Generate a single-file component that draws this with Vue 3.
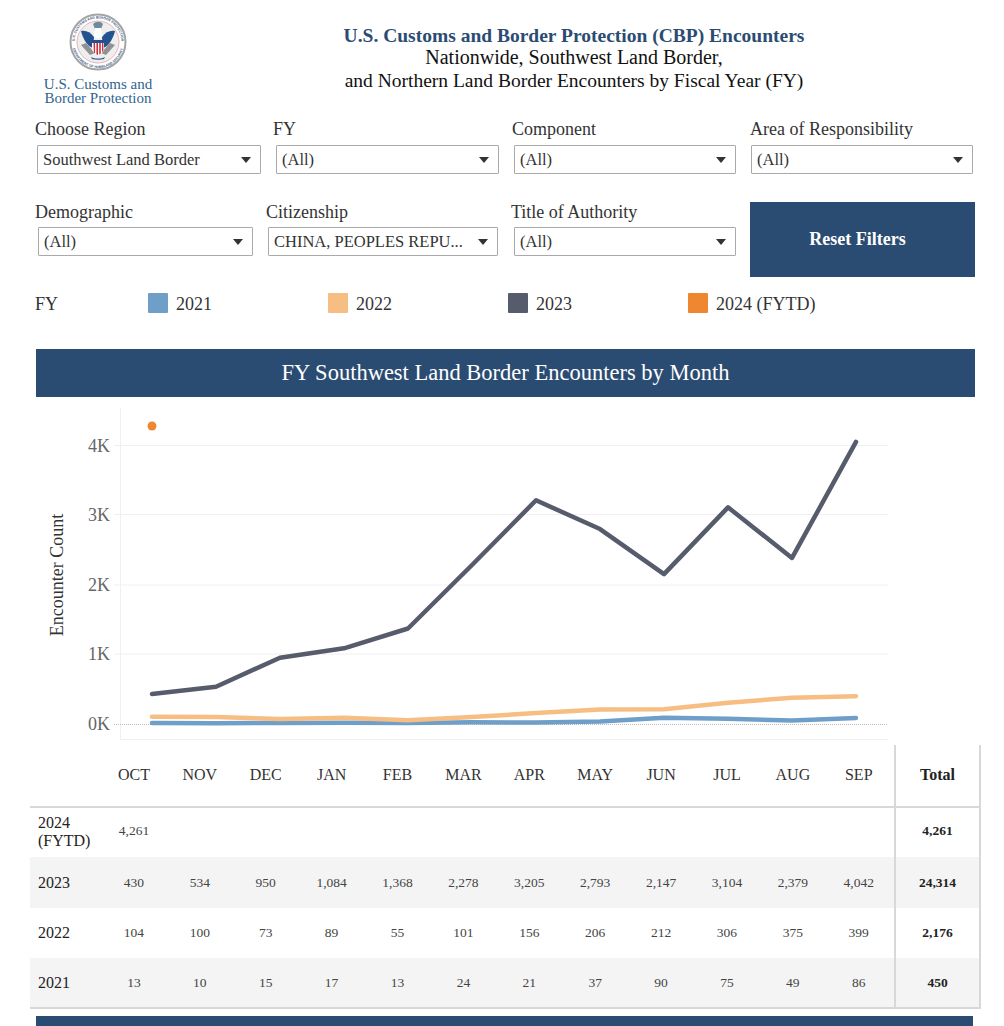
<script setup>
import { computed } from "vue";

const topFilters = [
  { label: "Choose Region", value: "Southwest Land Border" },
  { label: "FY", value: "(All)" },
  { label: "Component", value: "(All)" },
  { label: "Area of Responsibility", value: "(All)" },
];
const bottomFilters = [
  { label: "Demographic", value: "(All)" },
  { label: "Citizenship", value: "CHINA, PEOPLES REPU..." },
  { label: "Title of Authority", value: "(All)" },
];

const months = ["OCT", "NOV", "DEC", "JAN", "FEB", "MAR", "APR", "MAY", "JUN", "JUL", "AUG", "SEP"];

const years = [
  { name: "2024 (FYTD)", legend: "2024 (FYTD)", color: "#ef8630", values: [4261], total: "4,261" },
  { name: "2023", legend: "2023", color: "#575c6c", values: [430, 534, 950, 1084, 1368, 2278, 3205, 2793, 2147, 3104, 2379, 4042], total: "24,314" },
  { name: "2022", legend: "2022", color: "#f6be83", values: [104, 100, 73, 89, 55, 101, 156, 206, 212, 306, 375, 399], total: "2,176" },
  { name: "2021", legend: "2021", color: "#6f9fc9", values: [13, 10, 15, 17, 13, 24, 21, 37, 90, 75, 49, 86], total: "450" },
];

const legendItems = computed(() => [...years].reverse());

// chart coordinates, svg starts at y=397 of the page
const xOf = (i) => 152 + i * 64;
const yOf = (v) => 327 - v * 0.0698;

const ticks = [
  { label: "4K", y: 48.5 },
  { label: "3K", y: 117.5 },
  { label: "2K", y: 188 },
  { label: "1K", y: 257 },
];

const lines = computed(() =>
  years
    .filter((y) => y.values.length > 1)
    .reverse()
    .map((y) => ({
      color: y.color,
      points: y.values.map((v, i) => `${xOf(i)},${yOf(v)}`).join(" "),
    }))
);

const fmt = (v) => (v === undefined ? "" : v.toLocaleString("en-US"));
</script>

<template>
  <div class="app">
    <header class="top">
      <div class="logo">
        <svg class="seal" width="60" height="60" viewBox="0 0 60 60">
          <circle cx="30" cy="30" r="27.5" fill="#fff" stroke="#a4a4a4" stroke-width="2" />
          <circle cx="30" cy="30" r="21" fill="#eeeeee" stroke="#e4a3a8" stroke-width="0.8" />
          <defs>
            <path id="sealTop" d="M6.5 30a23.5 23.5 0 0 1 47 0" />
            <path id="sealBottom" d="M4 30a26 26 0 0 0 52 0" />
          </defs>
          <text class="seal-text"><textPath href="#sealTop" startOffset="50%" text-anchor="middle">U.S. CUSTOMS AND BORDER PROTECTION</textPath></text>
          <text class="seal-text"><textPath href="#sealBottom" startOffset="50%" text-anchor="middle">DEPARTMENT OF HOMELAND SECURITY</textPath></text>
          <path d="M13 33l9 10 5-2-9-10zM47 33l-9 10-5-2 9-10z" fill="#929292" />
          <path d="M13 19c5-1 9 1 13 6l-1 11c-6-2-10-9-12-17z" fill="#23528f" />
          <path d="M47 19c-5-1-9 1-13 6l1 11c6-2 10-9 12-17z" fill="#23528f" />
          <path d="M25 12c3-3 8-3 10 0l-2 5h-6z" fill="#6f8a9a" />
          <path d="M27 16h6l1 8-2 2h-4l-2-2z" fill="#fff" />
          <path d="M24 28h12v8c0 4-3 6-6 7-3-1-6-3-6-7z" fill="#fff" />
          <path d="M24 28h12v3H24z" fill="#24508f" />
          <path d="M25.5 31h1.6v10h-1.2zM28.4 31H30v12l-1.6-.7zM31.2 31h1.6v10.5l-1.6.9zM34 31h1.4v7l-1.4 2.6z" fill="#c8333f" />
          <path d="M23 45c4 2 10 2 14 0l-1 2c-4 1-8 1-12 0z" fill="#2c5a96" />
        </svg>
        <div class="logo-text">U.S. Customs and<br />Border Protection</div>
      </div>
      <div class="heading">
        <h1>U.S. Customs and Border Protection (CBP) Encounters</h1>
        <p class="wide">Nationwide, Southwest Land Border,</p>
        <p>and Northern Land Border Encounters by Fiscal Year (FY)</p>
      </div>
    </header>

    <section class="filters row-a">
      <div v-for="f in topFilters" :key="f.label" class="filter">
        <label>{{ f.label }}</label>
        <div class="select">
          <span>{{ f.value }}</span>
          <i class="caret"></i>
        </div>
      </div>
    </section>

    <section class="filters row-b">
      <div v-for="f in bottomFilters" :key="f.label" class="filter">
        <label>{{ f.label }}</label>
        <div class="select">
          <span>{{ f.value }}</span>
          <i class="caret"></i>
        </div>
      </div>
      <button class="reset">Reset Filters</button>
    </section>

    <section class="legend">
      <span class="legend-title">FY</span>
      <div v-for="y in legendItems" :key="y.name" class="legend-item">
        <i class="swatch" :style="{ background: y.color }"></i>
        <span>{{ y.legend }}</span>
      </div>
    </section>

    <h2 class="band">FY Southwest Land Border Encounters by Month</h2>

    <svg class="chart" width="1004" height="348" viewBox="0 0 1004 348">
      <line x1="120.5" y1="11" x2="120.5" y2="342" stroke="#f0f0f0" />
      <line x1="120" y1="342.5" x2="888" y2="342.5" stroke="#f0f0f0" />
      <g v-for="t in ticks" :key="t.label">
        <line x1="114" :y1="t.y" x2="888" :y2="t.y" stroke="#f0f0f0" />
        <text x="110" :y="t.y + 6" class="tick">{{ t.label }}</text>
      </g>
      <line x1="114" y1="327.5" x2="888" y2="327.5" stroke="#bbb" stroke-dasharray="1 1" />
      <text x="110" y="333" class="tick">0K</text>
      <text class="axis" transform="translate(63 178) rotate(-90)">Encounter Count</text>
      <polyline
        v-for="l in lines"
        :key="l.color"
        :points="l.points"
        :stroke="l.color"
        stroke-width="4.5"
        stroke-linecap="round"
        stroke-linejoin="round"
        fill="none"
      />
      <circle cx="152" cy="29" r="4.5" fill="#ef8630" />
    </svg>

    <table class="grid">
      <thead>
        <tr>
          <th class="head-year"></th>
          <th v-for="m in months" :key="m" class="month">{{ m }}</th>
          <th class="gap"></th>
          <th class="total">Total</th>
        </tr>
      </thead>
      <tbody>
        <tr v-for="y in years" :key="y.name">
          <th class="year">{{ y.name }}</th>
          <td v-for="(m, i) in months" :key="m">{{ fmt(y.values[i]) }}</td>
          <td class="gap"></td>
          <td class="total">{{ y.total }}</td>
        </tr>
      </tbody>
    </table>

    <div class="band-next"></div>
  </div>
</template>

<style scoped>
.app {
  width: 1004px;
  height: 1026px;
  overflow: hidden;
  background: #fff;
  color: #333;
  font-family: "Liberation Serif", serif;
}

.top {
  display: flex;
  height: 113px;
}
.logo {
  width: 196px;
  padding-top: 12px;
  display: flex;
  flex-direction: column;
  align-items: center;
}
.seal-text {
  font-family: "Liberation Sans", sans-serif;
  font-size: 3.4px;
  font-weight: 700;
  fill: #3a5a86;
}
.logo-text {
  margin-top: 5px;
  font-size: 15px;
  line-height: 14px;
  text-align: center;
  color: #2f6490;
  white-space: nowrap;
}
.heading {
  width: 756px;
  padding-top: 26px;
  text-align: center;
  color: #111;
  font-size: 19.5px;
  line-height: 23px;
}
.heading h1 {
  margin: 0 0 -1px;
  font-size: 19.5px;
  line-height: 20px;
  color: #2b4c72;
}
.heading p {
  margin: 0;
}
.heading .wide {
  font-size: 20px;
  line-height: 24px;
}

.filters {
  display: grid;
  padding-left: 35px;
}
.row-a {
  grid-template-columns: 238px 239px 238px 225px;
  height: 89px;
}
.row-b {
  grid-template-columns: 231px 245px 239px 225px;
  height: 91px;
}
.filter label {
  display: block;
  height: 32px;
  padding-top: 6px;
  box-sizing: border-box;
  font-size: 18px;
  line-height: 20px;
}
.select {
  height: 29px;
  box-sizing: border-box;
  display: flex;
  align-items: center;
  justify-content: space-between;
  padding: 0 9px 0 5px;
  border: 1px solid #aaa;
  border-radius: 1px;
  font-size: 16.5px;
  white-space: nowrap;
}
.caret {
  width: 0;
  height: 0;
  border-left: 5px solid transparent;
  border-right: 5px solid transparent;
  border-top: 6px solid #333;
}
.row-a .filter:nth-child(1) .select { margin: 0 12px 0 2px; }
.row-a .filter:nth-child(2) .select { margin: 0 13px 0 3px; }
.row-a .filter:nth-child(3) .select { margin: 0 14px 0 2px; }
.row-a .filter:nth-child(4) .select { margin: 0 2px 0 1px; }
.row-b .filter label { height: 25px; padding-top: 0; }
.row-b .filter:nth-child(1) .select { margin: 0 13px 0 3px; }
.row-b .filter:nth-child(2) .select { margin: 0 13px 0 2px; }
.row-b .filter:nth-child(3) .select { margin: 0 14px 0 3px; }
.reset {
  height: 75px;
  border: 0;
  padding: 0 10px 0 0;
  background: #2b4c72;
  color: #fff;
  font-family: inherit;
  font-size: 18px;
  font-weight: 700;
}

.legend {
  display: flex;
  align-items: center;
  height: 20px;
  padding-left: 35px;
  font-size: 18px;
}
.legend-title {
  width: 113px;
  padding-top: 2px;
}
.legend-item {
  width: 180px;
  display: flex;
  align-items: center;
  gap: 8px;
}
.legend-item span {
  padding-top: 2px;
}
.swatch {
  width: 20px;
  height: 20px;
  border-radius: 1px;
}

.band {
  margin: 36px 29px 0 36px;
  height: 48px;
  background: #2b4c72;
  color: #fff;
  font-size: 22.5px;
  font-weight: 400;
  line-height: 48px;
  text-align: center;
}

.chart {
  display: block;
}
.tick {
  font-size: 18px;
  fill: #666;
  text-anchor: end;
}
.axis {
  font-size: 18px;
  fill: #333;
  text-anchor: middle;
}

.grid {
  margin-left: 30px;
  width: 951px;
  table-layout: fixed;
  border-collapse: collapse;
  font-size: 13.5px;
  color: #444;
  text-align: center;
}
.grid thead th {
  height: 59px;
  padding: 0 0 2px;
  color: #333;
  font-size: 16px;
  font-weight: 400;
  border-bottom: 2px solid #d8d8d8;
}
.grid .head-year {
  width: 71px;
}
.grid .month {
  width: 65.9px;
}
.grid thead th.total,
.grid td.total {
  width: 83px;
  color: #222;
  font-weight: 700;
  border-left: 2px solid #d8d8d8;
  border-right: 2px solid #d8d8d8;
}
.grid tbody tr {
  height: 50px;
}
.grid tbody tr:nth-child(2) {
  height: 51px;
}
.grid tbody tr:nth-child(even) {
  background: #f4f4f4;
}
.grid tbody tr:first-child td {
  padding-bottom: 4px;
}
.grid tbody tr:first-child .year {
  padding-bottom: 2px;
}
.grid tbody tr:last-child {
  border-bottom: 2px solid #d8d8d8;
}
.grid .year {
  padding: 0 0 0 8px;
  color: #222;
  font-size: 16px;
  font-weight: 400;
  line-height: 18px;
  text-align: left;
}
.grid td {
  padding: 0;
}

.band-next {
  margin: 7px 31px 0 36px;
  height: 10px;
  background: #2b4c72;
}
</style>

<style>
html,
body {
  margin: 0;
  overflow: hidden;
}
</style>
